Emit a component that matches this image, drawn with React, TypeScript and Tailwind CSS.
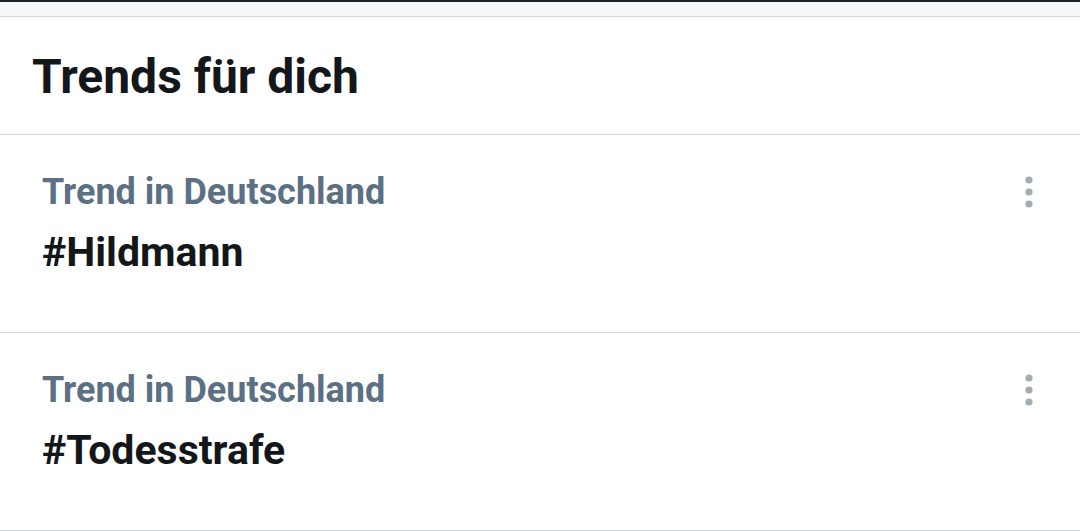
import React from 'react';

const trends = [
  { label: 'Trend in Deutschland', tag: '#Hildmann' },
  { label: 'Trend in Deutschland', tag: '#Todesstrafe' },
];

const MoreIcon: React.FC = () => (
  <svg width="10" height="34" viewBox="0 0 10 34" className="text-[#a3acb4]">
    <circle cx="5" cy="5" r="3.6" fill="currentColor" />
    <circle cx="5" cy="17" r="3.6" fill="currentColor" />
    <circle cx="5" cy="29" r="3.6" fill="currentColor" />
  </svg>
);

const App: React.FC = () => {
  return (
    <div
      className="w-[1080px] h-[531px] overflow-hidden bg-white"
      style={{ fontFamily: 'Roboto, "Liberation Sans", sans-serif' }}
    >
      <div className="h-[2px] bg-[#1c2329]" />
      <div className="h-[15px] bg-[#f6f8fa] border-b border-[#cfd6db]" />

      <div className="h-[118px] border-b border-[#cfd6db] flex items-center px-[32px]">
        <h1 className="text-[48px] font-bold text-[#14171a] leading-none pt-[2px]">Trends für dich</h1>
      </div>

      {trends.map((t) => (
        <div key={t.tag} className="h-[198px] border-b border-[#cfd6db] flex justify-between pl-[42px] pr-[46px] pt-[37px]">
          <div className="flex flex-col">
            <span className="text-[36px] font-bold text-[#5b7083] leading-[40px]">{t.label}</span>
            <span className="text-[41px] font-bold text-[#14171a] leading-[48px] mt-[16px]">{t.tag}</span>
          </div>
          <div className="pt-[3px]">
            <MoreIcon />
          </div>
        </div>
      ))}
    </div>
  );
};

export default App;
